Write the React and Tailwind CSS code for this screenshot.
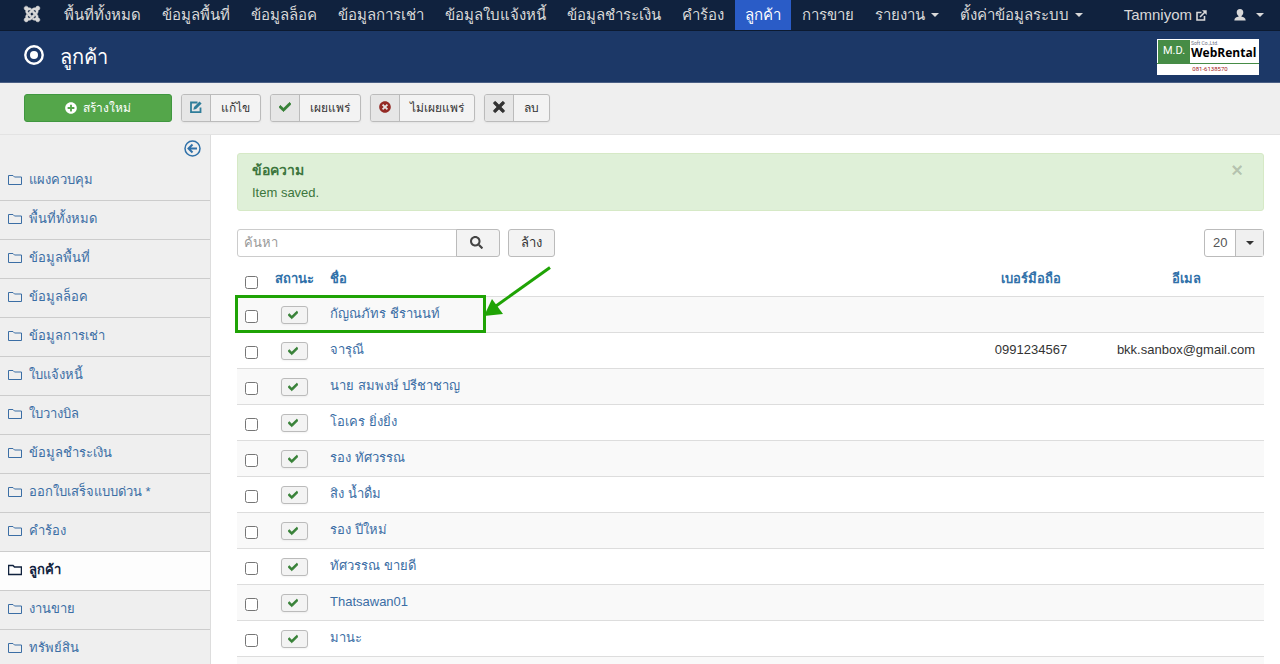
import { FaCheck, FaJoomla, FaPlusCircle, FaSearch, FaTimes, FaTimesCircle } from 'react-icons/fa'

const navItems = [
  { label: 'พื้นที่ทั้งหมด' },
  { label: 'ข้อมูลพื้นที่' },
  { label: 'ข้อมูลล็อค' },
  { label: 'ข้อมูลการเช่า' },
  { label: 'ข้อมูลใบแจ้งหนี้' },
  { label: 'ข้อมูลชำระเงิน' },
  { label: 'คำร้อง' },
  { label: 'ลูกค้า', active: true },
  { label: 'การขาย' },
  { label: 'รายงาน', menu: true },
  { label: 'ตั้งค่าข้อมูลระบบ', menu: true },
]

const sidebarItems = [
  'แผงควบคุม',
  'พื้นที่ทั้งหมด',
  'ข้อมูลพื้นที่',
  'ข้อมูลล็อค',
  'ข้อมูลการเช่า',
  'ใบแจ้งหนี้',
  'ใบวางบิล',
  'ข้อมูลชำระเงิน',
  'ออกใบเสร็จแบบด่วน *',
  'คำร้อง',
  'ลูกค้า',
  'งานขาย',
  'ทรัพย์สิน',
]

const customers = [
  { name: 'กัญณภัทร ชีรานนท์', highlight: true },
  { name: 'จารุณี', phone: '0991234567', email: 'bkk.sanbox@gmail.com' },
  { name: 'นาย สมพงษ์ ปรีชาชาญ' },
  { name: 'โอเคร ยิ่งยิ่ง' },
  { name: 'รอง ทัศวรรณ' },
  { name: 'สิง น้ำดื่ม' },
  { name: 'รอง ปีใหม่' },
  { name: 'ทัศวรรณ ขายดี' },
  { name: 'Thatsawan01' },
  { name: 'มานะ' },
]

const Caret = () => (
  <svg viewBox="0 0 8 4" className="h-1 w-2 shrink-0" fill="currentColor">
    <path d="M0 0h8L4 4z" />
  </svg>
)

const FolderIcon = ({ bold }) => (
  <svg viewBox="0 0 14 12" className="h-3 w-3.5 shrink-0" fill="none" stroke="currentColor" strokeWidth={bold ? 1.5 : 1}>
    <path d="M.5 10.500V1.500h4.500l1.500 1.500h7v7.500z" />
  </svg>
)

const EditIcon = () => (
  <svg viewBox="0 0 12 12" className="size-3" fill="none" stroke="currentColor" strokeWidth="1.800">
    <path d="M7.500 1.500H1v9.600h9.500V6.500" />
    <path d="M3.300 8.800l.7-2.800L9.500.4l2.100 2.100L6.100 8.100z" fill="currentColor" stroke="none" />
  </svg>
)

const ExternalIcon = () => (
  <svg viewBox="0 0 11 11" className="size-[11px]" fill="none" stroke="currentColor" strokeWidth="1.600">
    <path d="M5.500 2.500H1v7.500h7.500V6" />
    <path d="M4 7l5-5" />
    <path d="M6 .3h4.700V5z" fill="currentColor" stroke="none" />
  </svg>
)

const UserIcon = () => (
  <svg viewBox="0 0 12 12" className="size-3" fill="currentColor">
    <path d="M6 0c2.200 0 3.300 1.300 3.300 3.200 0 1.700-.8 3.100-1.800 3.700v.9c2.300.3 4 1.200 4.200 3.700H.3c.2-2.500 1.900-3.400 4.200-3.700v-.9C3.500 6.300 2.700 4.900 2.700 3.200 2.700 1.300 3.800 0 6 0z" />
  </svg>
)

const Navbar = () => (
  <nav className="flex h-[31px] items-stretch border-b border-[#0c1a30] bg-[#10223e] pl-[23px] pr-4 text-[15px] text-[#d9d9d9]">
    <a href="#" aria-label="Joomla" className="mr-[13px] flex items-center pb-0.5">
      <FaJoomla className="size-[18px]" stroke="currentColor" strokeWidth="14" />
    </a>
    <ul className="flex flex-1 gap-px">
      {navItems.map(({ label, active, menu }) => (
        <li key={label} className="flex">
          <a
            href="#"
            className={
              active
                ? 'flex items-center bg-[#2a5cc7] px-2.5 text-white'
                : 'flex items-center gap-1.5 whitespace-nowrap px-2.5'
            }
          >
            <span>{label}</span>
            {menu && <Caret />}
          </a>
        </li>
      ))}
    </ul>
    <a href="#" className="mr-[27px] flex items-center gap-1">
      Tamniyom
      <ExternalIcon />
    </a>
    <button aria-label="User menu" className="flex items-center gap-2.5">
      <UserIcon />
      <Caret />
    </button>
  </nav>
)

const Logo = () => (
  <div className="flex h-9 w-[102px] flex-col bg-white pt-px font-['Roboto',sans-serif]">
    <div className="flex h-6 border-b border-[#468c46] pl-px">
      <div className="flex w-8 items-center justify-center bg-[#468c46] text-[11px] text-white">M.D.</div>
      <div className="flex flex-col pl-px">
        <span className="h-1.5 text-[5px] leading-[7px] text-gray-500">Soft Co.,Ltd.</span>
        <span className="font-['Open_Sans',sans-serif] text-[12px] font-bold leading-[14px] text-black">WebRental</span>
      </div>
    </div>
    <span className="pl-1 text-center text-[6px] leading-[10px] text-[#a02020]">081-6138570</span>
  </div>
)

const Header = () => (
  <header className="flex h-[52px] items-center border-b border-[#4a5f85] bg-[#1c3867] pl-6 pr-[21px] text-white">
    <svg viewBox="0 0 20 20" className="mb-1 size-5">
      <circle cx="10" cy="10" r="8.700" fill="none" stroke="currentColor" strokeWidth="2.400" />
      <circle cx="10" cy="10" r="4" fill="currentColor" />
    </svg>
    <h1 className="ml-4 flex-1 text-[20px]">ลูกค้า</h1>
    <Logo />
  </header>
)

const ToolbarButton = ({ icon, children }) => (
  <button className="flex h-7 items-stretch overflow-hidden rounded-[3px] border border-[#bbb] bg-[#f3f3f3] text-[12px] text-[#333] shadow-xs">
    <span className="flex w-[29px] items-center justify-center border-r border-[#bbb] bg-[#e6e6e6] pb-0.5">{icon}</span>
    <span className="flex items-center px-2.5">{children}</span>
  </button>
)

const Toolbar = () => (
  <div className="flex h-[52px] items-center gap-[9px] border-b border-[#e3e3e3] bg-[#efefef] px-6 pb-0.5">
    <button className="flex h-7 w-[148px] items-center justify-center gap-1.5 rounded-[3px] border border-[#409740] bg-[#54a64a] text-[12px] text-white">
      <FaPlusCircle className="size-3" />
      สร้างใหม่
    </button>
    <ToolbarButton icon={<span className="text-[#2f7d9a]"><EditIcon /></span>}>แก้ไข</ToolbarButton>
    <ToolbarButton icon={<FaCheck className="size-3 text-[#378137]" stroke="currentColor" strokeWidth="30" />}>เผยแพร่</ToolbarButton>
    <ToolbarButton icon={<FaTimesCircle className="size-3 text-[#942a25]" />}>ไม่เผยแพร่</ToolbarButton>
    <ToolbarButton icon={<FaTimes className="size-4 text-[#333]" stroke="currentColor" strokeWidth="24" />}>ลบ</ToolbarButton>
  </div>
)

const Sidebar = () => (
  <aside className="w-[211px] shrink-0 border-r border-[#ddd] bg-[#efefef] text-[13px]">
    <div className="flex h-[27px] justify-end pr-[9px] pt-[5px]">
      <button aria-label="Toggle sidebar" className="h-[17px] text-[#3071a9]">
        <svg viewBox="0 0 17 17" className="size-[17px]" fill="none" stroke="currentColor">
          <circle cx="8.500" cy="8.500" r="7.500" strokeWidth="1.500" />
          <path d="M8.500 4.500l-4 4 4 4M4.500 8.500h8.500" strokeWidth="2" />
        </svg>
      </button>
    </div>
    <ul>
      {sidebarItems.map((label) => {
        const active = label === 'ลูกค้า'
        return (
          <li key={label} className="border-b border-[#ccc]">
            <a
              href="#"
              className={
                active
                  ? 'flex h-[38px] items-center gap-[7px] bg-[#fdfdfd] pb-0.5 pl-2 font-bold text-[#10223e]'
                  : 'flex h-[38px] items-center gap-[7px] pb-0.5 pl-2 text-[#3b6ea5]'
              }
            >
              <FolderIcon bold={active} />
              {label}
            </a>
          </li>
        )
      })}
    </ul>
  </aside>
)

const Alert = () => (
  <div role="alert" className="relative rounded-[3px] border border-[#d6e9c6] bg-[#dff0d8] px-3.5 py-[5px] text-[13px] leading-6 text-[#3c763d]">
    <h4 className="text-[14px] font-bold leading-[22px]">ข้อความ</h4>
    <p>Item saved.</p>
    <button aria-label="Close" className="absolute right-5 top-1.5 text-[20px] font-bold leading-5 text-black/20">
      ×
    </button>
  </div>
)

const SearchBar = () => (
  <div className="mt-[18px] flex h-7 text-[13px]">
    <input
      type="text"
      aria-label="ค้นหา"
      placeholder="ค้นหา"
      className="w-[220px] rounded-l-[3px] border border-[#ccc] bg-white px-1.5 placeholder:text-[#999]"
    />
    <button aria-label="Search" className="-ml-px flex w-11 items-center justify-center rounded-r-[3px] border border-[#bbb] bg-[#f3f3f3] pb-0.5 pr-1 text-[#444]">
      <FaSearch className="size-[13px]" />
    </button>
    <button className="ml-2 rounded-[3px] border border-[#bbb] bg-[#f3f3f3] px-3 text-[#333]">ล้าง</button>
    <label className="relative ml-auto flex">
      <select
        aria-label="Items per page"
        defaultValue="20"
        className="w-[60px] appearance-none rounded-[3px] border border-[#bbb] bg-white pl-2 text-[#555]"
      >
        <option>20</option>
      </select>
      <span className="pointer-events-none absolute inset-y-px right-px flex w-7 items-center justify-center border-l border-[#bbb] bg-[#f0f0f0] text-[#333]">
        <Caret />
      </span>
    </label>
  </div>
)

const Checkbox = ({ label }) => <input type="checkbox" aria-label={label} className="mt-1 block size-[13px]" />

// Box and arrow pointing out the newly saved customer
const Highlight = () => (
  <>
    <span className="pointer-events-none absolute -left-0.5 -top-0.5 h-[38px] w-[251px] border-[3px] border-[#1fa305]" />
    <svg viewBox="0 0 68 52" className="pointer-events-none absolute -top-[31px] left-[247px] h-[52px] w-[68px]">
      <path d="M66 1.500L12 40" fill="none" stroke="#1fa305" strokeWidth="3" />
      <path d="M0 50l8-17 11 15z" fill="#1fa305" />
    </svg>
  </>
)

const CustomerTable = () => (
  <table className="mt-2 w-full table-fixed text-[13px] text-[#333]">
    <colgroup>
      <col className="w-[30px]" />
      <col className="w-[54px]" />
      <col />
      <col className="w-[154px]" />
      <col className="w-[156px]" />
    </colgroup>
    <thead>
      <tr className="h-[31px] text-[#3071a9]">
        <th className="pl-2"><Checkbox label="Select all" /></th>
        <th className="pb-1"><a href="#">สถานะ</a></th>
        <th className="pb-1 pl-[9px] text-left"><a href="#">ชื่อ</a></th>
        <th className="pb-1"><a href="#">เบอร์มือถือ</a></th>
        <th className="pb-1"><a href="#">อีเมล</a></th>
      </tr>
    </thead>
    <tbody>
      {customers.map(({ name, phone, email, highlight }) => (
        <tr key={name} className="relative h-9 border-t border-[#ddd] odd:bg-[#f9f9f9]">
          <td className="pl-2">
            <Checkbox label={name} />
            {highlight && <Highlight />}
          </td>
          <td className="pt-0.5">
            <button aria-label="Published" className="mx-auto flex h-[18px] w-[27px] items-center justify-center rounded-[3px] border border-[#bbb] bg-[#f3f3f3] pr-0.5 text-[#378137] shadow-xs">
              <FaCheck className="size-2.5" stroke="currentColor" strokeWidth="40" />
            </button>
          </td>
          <td className="pl-[9px]"><a href="#" className="text-[#3b6ea5]">{name}</a></td>
          <td className="text-center">{phone}</td>
          <td className="text-center">{email}</td>
        </tr>
      ))}
    </tbody>
    <tfoot>
      <tr className="h-9 border-t border-[#ddd] bg-[#f9f9f9]">
        <td colSpan={5} />
      </tr>
    </tfoot>
  </table>
)

const App = () => (
  <div className="flex h-screen flex-col overflow-hidden bg-white font-['Liberation_Sans',sans-serif]">
    <div className="shrink-0">
      <Navbar />
      <Header />
      <Toolbar />
    </div>
    <div className="flex min-h-0 flex-1">
      <Sidebar />
      <main className="min-w-0 flex-1 pl-[26px] pr-4 pt-[18px]">
        <Alert />
        <SearchBar />
        <CustomerTable />
      </main>
    </div>
  </div>
)

export default App
